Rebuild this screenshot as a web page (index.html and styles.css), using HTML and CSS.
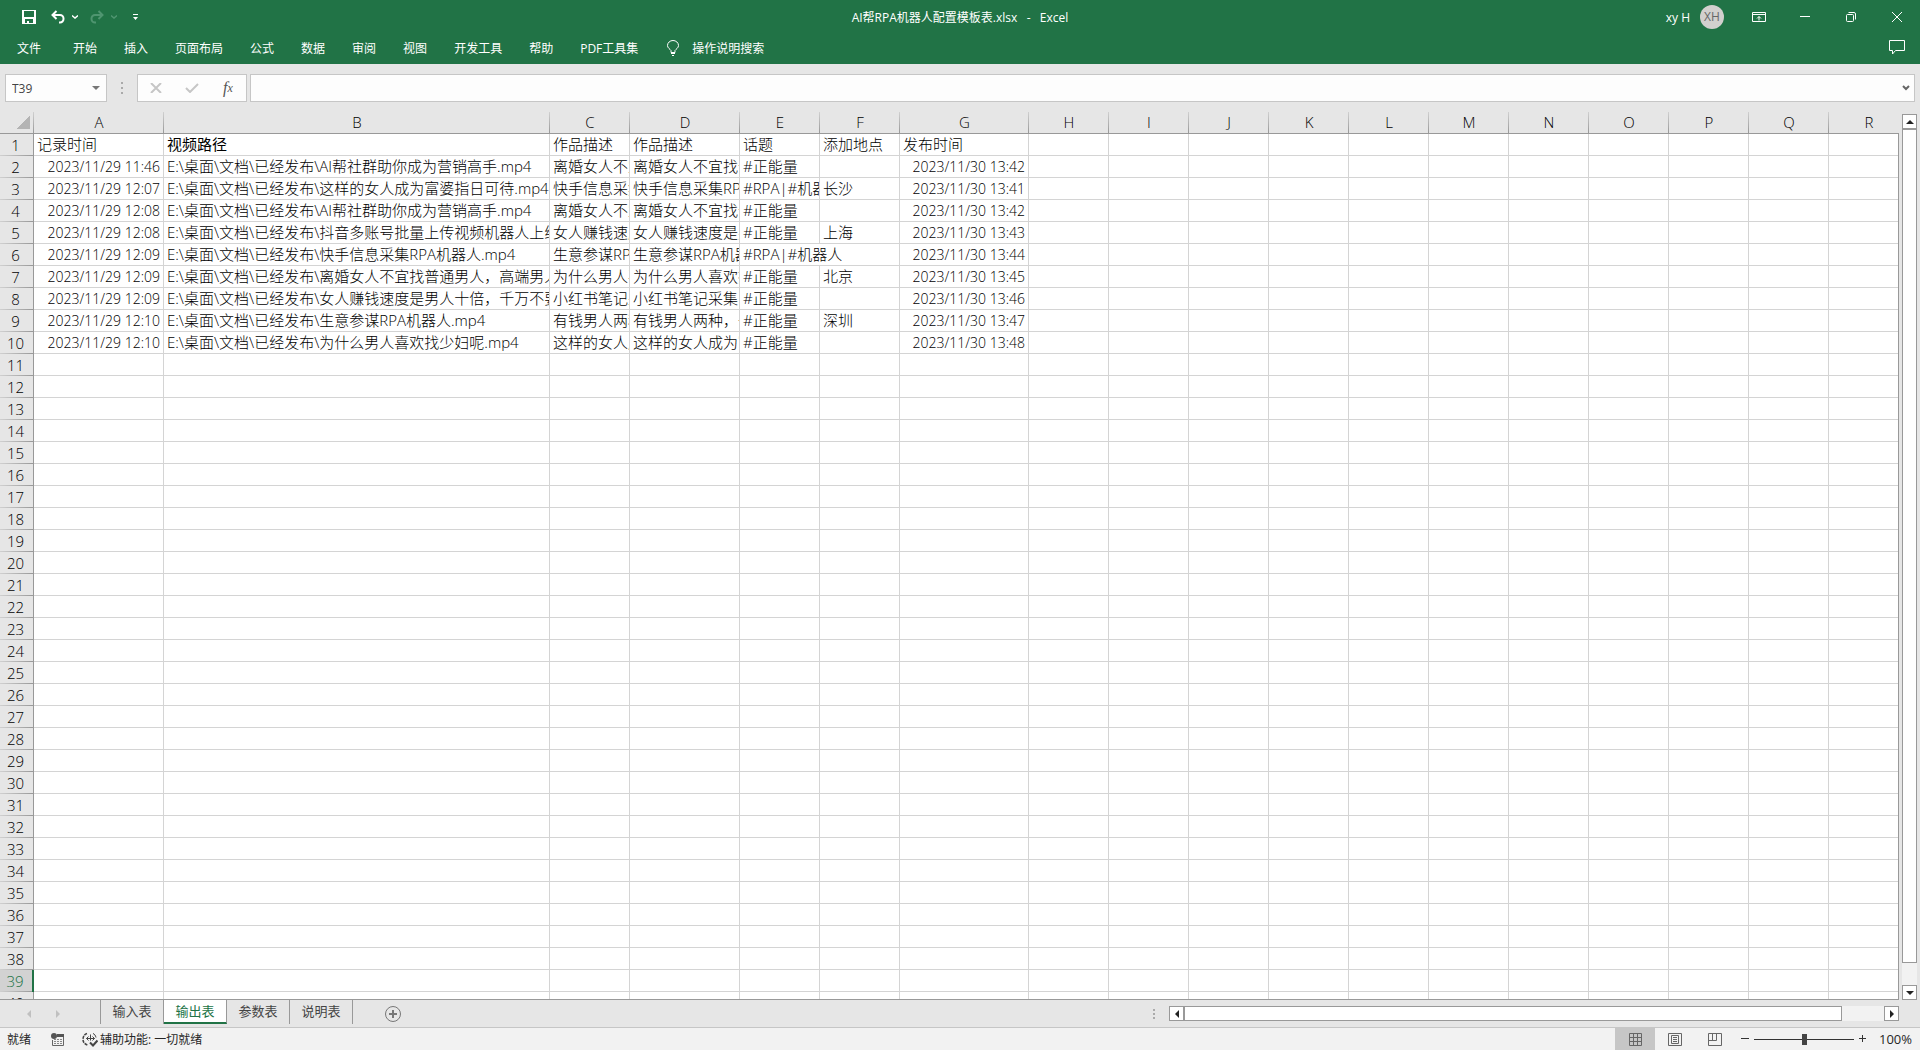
FILE: index.html
```html
<!DOCTYPE html>
<html lang="zh-CN">
<head>
  <meta charset="UTF-8">
  <title>AI帮RPA机器人配置模板表.xlsx - Excel</title>
  <meta name="viewport" content="width=device-width, initial-scale=1.0">
  <link rel="stylesheet" href="styles.css">
</head>
<body>

  <header class="ribbon">
    <div class="titlebar">
      <div class="quick">
        <button class="save" aria-label="保存">
          <svg width="14" height="14" viewBox="0 0 14 14"><path d="M0 0h14v14H0z M2 1v6h10V1z M3 9v4h2v-2h2v2h4V9z" fill="#fff" fill-rule="evenodd"/></svg>
        </button>
        <button class="undo" aria-label="撤消">
          <svg width="14" height="14" viewBox="0 0 14 14" fill="none" stroke="#fff" stroke-width="2"><path d="M5.500 1L1.500 5l4 4M2 5h7a3.500 3.500 0 0 1 3.500 3.500V9A3.500 3.500 0 0 1 9 12.500H8"/></svg>
        </button>
        <button class="arrow" aria-label="撤消列表">
          <svg width="6" height="4" viewBox="0 0 6 4" fill="none" stroke="#fff" stroke-width="1.400"><path d="M0 .5l3 2.500 3-2.500"/></svg>
        </button>
        <button class="redo" aria-label="恢复" disabled>
          <svg width="14" height="14" viewBox="0 0 14 14" fill="none" stroke="#4f9570" stroke-width="2"><path d="M8.500 1l4 4-4 4M12 5H5a3.500 3.500 0 0 0-3.500 3.500V9A3.500 3.500 0 0 0 5 12.500h1"/></svg>
        </button>
        <button class="arrow" aria-label="恢复列表" disabled>
          <svg width="6" height="4" viewBox="0 0 6 4" fill="none" stroke="#4f9570" stroke-width="1.400"><path d="M0 .5l3 2.500 3-2.500"/></svg>
        </button>
        <button class="more" aria-label="自定义快速访问工具栏">
          <svg width="5" height="6" viewBox="0 0 5 6" fill="#fff"><path d="M0 0h5v1H0zM0 3h5L2.500 6z"/></svg>
        </button>
      </div>
      <div class="title">AI帮RPA机器人配置模板表.xlsx&nbsp;&nbsp; -&nbsp;&nbsp; Excel</div>
      <div class="window">
        <span class="user">xy H</span>
        <span class="avatar">XH</span>
        <button aria-label="功能区显示选项">
          <svg width="14" height="12" viewBox="0 0 14 12" fill="none" stroke="#fff"><path d="M.5 1.500h13v9H.5zM.5 3.500h13M7 9.500v-4M5 7.500l2-2 2 2"/></svg>
        </button>
        <button aria-label="最小化">
          <svg width="10" height="10" viewBox="0 0 10 10" stroke="#fff"><path d="M0 4.500h10"/></svg>
        </button>
        <button aria-label="还原">
          <svg width="10" height="10" viewBox="0 0 10 10" fill="none" stroke="#fff"><rect x=".5" y="2.500" width="7" height="7" rx="1"/><path d="M2.500.5H8A1.500 1.500 0 0 1 9.500 2v5.500"/></svg>
        </button>
        <button aria-label="关闭">
          <svg width="10" height="10" viewBox="0 0 10 10" stroke="#fff"><path d="M0 0l10 10M10 0L0 10"/></svg>
        </button>
      </div>
    </div>
    <nav class="menu">
      <a class="file" href="#">文件</a>
      <a href="#">开始</a>
      <a href="#">插入</a>
      <a href="#">页面布局</a>
      <a href="#">公式</a>
      <a href="#">数据</a>
      <a href="#">审阅</a>
      <a href="#">视图</a>
      <a href="#">开发工具</a>
      <a href="#">帮助</a>
      <a href="#">PDF工具集</a>
      <a class="tell" href="#">
        <svg width="12" height="16" viewBox="0 0 12 16" fill="none" stroke="#fff"><path d="M4 12.500v-2C3 9 .5 8 .5 5.500a5.500 5 0 0 1 11 0C11.500 8 9 9 8 10.500v2zM4 13.500h4M5 15.500h2"/></svg>
        操作说明搜索
      </a>
      <button class="comment" aria-label="批注">
        <svg width="16" height="15" viewBox="0 0 16 15" fill="none" stroke="#fff"><path d="M.5.5h15v10h-9l-3 3.500v-3.500h-3z"/></svg>
      </button>
    </nav>
  </header>

  <div class="formula">
    <div class="namebox">
      <input type="text" value="T39" aria-label="名称框">
      <button aria-label="名称列表"><svg width="8" height="4" viewBox="0 0 8 4"><path d="M0 0h8L4 4z" fill="#777"/></svg></button>
    </div>
    <div class="dots"><i></i><i></i><i></i></div>
    <div class="actions">
      <button aria-label="取消"><svg width="12" height="10" viewBox="0 0 12 10" stroke="#c6c6c6" stroke-width="2"><path d="M1 0l10 10M11 0L1 10"/></svg></button>
      <button aria-label="输入"><svg width="14" height="10" viewBox="0 0 14 10" fill="none" stroke="#c6c6c6" stroke-width="2"><path d="M1 5l4 4 8-8"/></svg></button>
      <button class="fx" aria-label="插入函数"><i>f</i><sub>x</sub></button>
    </div>
    <div class="editor">
      <input type="text" aria-label="编辑栏">
      <button aria-label="展开编辑栏"><svg width="8" height="6" viewBox="0 0 8 6" fill="none" stroke="#666" stroke-width="2"><path d="M1 1l3 3 3-3"/></svg></button>
    </div>
  </div>

  <main class="sheet">
    <div class="grid">
      <table>
        <colgroup id="cols">
          <col class="c-head"><col class="c-date"><col class="c-path"><col class="c-std"><col class="c-desc"><col class="c-std"><col class="c-std"><col class="c-pub">
        </colgroup>
        <thead>
          <tr id="letters">
            <th class="corner"></th><th>A</th><th>B</th><th>C</th><th>D</th><th>E</th><th>F</th><th>G</th>
          </tr>
        </thead>
        <tbody id="rows">
          <tr><th>1</th><td>记录时间</td><td class="hei">视频路径</td><td>作品描述</td><td>作品描述</td><td>话题</td><td>添加地点</td><td>发布时间</td></tr>
          <tr><th>2</th><td class="num">2023/11/29 11:46</td><td>E:\桌面\文档\已经发布\AI帮社群助你成为营销高手.mp4</td><td>离婚女人不宜</td><td>离婚女人不宜找普</td><td>#正能量</td><td></td><td class="num">2023/11/30 13:42</td></tr>
          <tr><th>3</th><td class="num">2023/11/29 12:07</td><td>E:\桌面\文档\已经发布\这样的女人成为富婆指日可待.mp4</td><td>快手信息采集</td><td>快手信息采集RPA</td><td>#RPA|#机器人</td><td>长沙</td><td class="num">2023/11/30 13:41</td></tr>
          <tr><th>4</th><td class="num">2023/11/29 12:08</td><td>E:\桌面\文档\已经发布\AI帮社群助你成为营销高手.mp4</td><td>离婚女人不宜</td><td>离婚女人不宜找普</td><td>#正能量</td><td></td><td class="num">2023/11/30 13:42</td></tr>
          <tr><th>5</th><td class="num">2023/11/29 12:08</td><td>E:\桌面\文档\已经发布\抖音多账号批量上传视频机器人上线</td><td>女人赚钱速度</td><td>女人赚钱速度是男</td><td>#正能量</td><td>上海</td><td class="num">2023/11/30 13:43</td></tr>
          <tr><th>6</th><td class="num">2023/11/29 12:09</td><td>E:\桌面\文档\已经发布\快手信息采集RPA机器人.mp4</td><td>生意参谋RPA</td><td>生意参谋RPA机器</td><td colspan="2">#RPA|#机器人</td><td class="num">2023/11/30 13:44</td></tr>
          <tr><th>7</th><td class="num">2023/11/29 12:09</td><td>E:\桌面\文档\已经发布\离婚女人不宜找普通男人，高端男人</td><td>为什么男人喜</td><td>为什么男人喜欢找</td><td>#正能量</td><td>北京</td><td class="num">2023/11/30 13:45</td></tr>
          <tr><th>8</th><td class="num">2023/11/29 12:09</td><td>E:\桌面\文档\已经发布\女人赚钱速度是男人十倍，千万不要</td><td>小红书笔记采</td><td>小红书笔记采集</td><td>#正能量</td><td></td><td class="num">2023/11/30 13:46</td></tr>
          <tr><th>9</th><td class="num">2023/11/29 12:10</td><td>E:\桌面\文档\已经发布\生意参谋RPA机器人.mp4</td><td>有钱男人两种</td><td>有钱男人两种，一</td><td>#正能量</td><td>深圳</td><td class="num">2023/11/30 13:47</td></tr>
          <tr><th>10</th><td class="num">2023/11/29 12:10</td><td>E:\桌面\文档\已经发布\为什么男人喜欢找少妇呢.mp4</td><td>这样的女人成</td><td>这样的女人成为富</td><td>#正能量</td><td></td><td class="num">2023/11/30 13:48</td></tr>
        </tbody>
      </table>
    </div>
    <div class="vscroll">
      <button aria-label="向上滚动"><svg width="8" height="4" viewBox="0 0 8 4"><path d="M0 4h8L4 0z" fill="#222"/></svg></button>
      <div class="thumb"></div>
      <div class="track"></div>
      <button aria-label="向下滚动"><svg width="8" height="4" viewBox="0 0 8 4"><path d="M0 0h8L4 4z" fill="#222"/></svg></button>
    </div>
  </main>

  <div class="tabbar">
    <div class="tabnav">
      <button aria-label="上一个工作表" disabled><svg width="4" height="8" viewBox="0 0 4 8"><path d="M4 0v8L0 4z" fill="#c0c0c0"/></svg></button>
      <button aria-label="下一个工作表" disabled><svg width="4" height="8" viewBox="0 0 4 8"><path d="M0 0v8l4-4z" fill="#c0c0c0"/></svg></button>
    </div>
    <div class="tabs">
      <a href="#">输入表</a>
      <a href="#" class="active">输出表</a>
      <a href="#">参数表</a>
      <a href="#">说明表</a>
    </div>
    <button class="add" aria-label="新工作表">
      <svg width="16" height="16" viewBox="0 0 16 16" fill="none" stroke="#777"><circle cx="8" cy="8" r="7.500"/><path d="M8 4v8M4 8h8" stroke-width="2"/></svg>
    </button>
    <div class="dots"><i></i><i></i><i></i></div>
    <div class="hscroll">
      <button aria-label="向左滚动"><svg width="4" height="8" viewBox="0 0 4 8"><path d="M4 0v8L0 4z" fill="#222"/></svg></button>
      <div class="thumb"></div>
      <div class="track"></div>
      <button aria-label="向右滚动"><svg width="4" height="8" viewBox="0 0 4 8"><path d="M0 0v8l4-4z" fill="#222"/></svg></button>
    </div>
  </div>

  <footer class="status">
    <span>就绪</span>
    <button class="macro" aria-label="录制宏">
      <svg width="13" height="13" viewBox="0 0 13 13"><path d="M1.500 7v5.500h11V4" fill="none" stroke="#666"/><path d="M6 1h7v3H6z" fill="#555"/><circle cx="3" cy="3" r="3" fill="#555"/><path d="M3 6.500h2M6 6.500h2M9 6.500h2M3 8.500h2M6 8.500h2M9 8.500h2M3 10.500h2M6 10.500h2M9 10.500h2" stroke="#888"/></svg>
    </button>
    <button class="access">
      <svg width="16" height="15" viewBox="0 0 16 15" fill="none" stroke="#444"><path d="M5 1.500C2 2.500 1 5 1 7.500S2.500 12 5.500 13" stroke-dasharray="3 1" stroke-width="1.500"/><path d="M11 1.500c1.500.5 2.500 2 3 4M4.500 6.500h8M8.500 2.500v6M6.500 4.500l-2 2 2 2M10.500 4.500l2 2-2 2"/><path d="M8 10.500l3 3 4.500-5" stroke-width="2"/></svg>
      辅助功能: 一切就绪
    </button>
    <div class="views">
      <button class="on" aria-label="普通"><svg width="13" height="13" viewBox="0 0 13 13" fill="none" stroke="#666"><path d="M.5.5h12v12H.5zM4.500.5v12M8.500.5v12M.5 4.500h12M.5 8.500h12"/></svg></button>
      <button aria-label="页面布局"><svg width="14" height="13" viewBox="0 0 14 13" fill="none" stroke="#666"><path d="M.5.5h13v12H.5zM3.500 2.500h7v8h-7zM5 4.500h4M5 6.500h4M5 8.500h4"/></svg></button>
      <button aria-label="分页预览"><svg width="14" height="13" viewBox="0 0 14 13" fill="none" stroke="#666"><path d="M.5.5h13v12H.5zM.5 7.500h8v-7M4.500.5v7"/></svg></button>
    </div>
    <button class="zoom" aria-label="缩小"><svg width="8" height="8" viewBox="0 0 8 8" stroke="#333"><path d="M0 3.500h8"/></svg></button>
    <input class="slider" type="range" min="0" max="100" value="50" aria-label="缩放">
    <button class="zoom" aria-label="放大"><svg width="8" height="8" viewBox="0 0 8 8" stroke="#333"><path d="M0 3.500h7M3.500 0v7"/></svg></button>
    <span class="percent">100%</span>
  </footer>

  <script src="script.js"></script>
</body>
</html>
```
FILE: styles.css
```css
* {
  box-sizing: border-box;
}

body {
  margin: 0;
  height: 100vh;
  display: flex;
  flex-direction: column;
  overflow: hidden;
  background: #e6e6e6;
  color: #262626;
  font-family: "Open Sans", "Noto Sans CJK SC", sans-serif;
  font-size: 12px;
}

a {
  color: inherit;
  text-decoration: none;
}

button {
  display: flex;
  align-items: center;
  justify-content: center;
  padding: 0;
  border: none;
  background: none;
  color: inherit;
  font: inherit;
}

input {
  min-width: 0;
  border: none;
  outline: none;
  background: none;
  color: inherit;
  font: inherit;
}

svg {
  flex: none;
}

/* title bar + menu */
.ribbon {
  background: #217346;
  color: #fff;
}

.titlebar {
  display: grid;
  grid-template-columns: 1fr auto 1fr;
  align-items: center;
  height: 34px;
}

.quick {
  display: flex;
  align-items: center;
  padding-left: 22px;
}

.undo {
  margin-left: 15px;
}

.arrow {
  margin-left: 7px;
}

.redo {
  margin-left: 12px;
}

.more {
  margin-left: 16px;
}

.window {
  display: flex;
  align-items: center;
  justify-content: flex-end;
}

.window button {
  width: 46px;
  height: 30px;
}

.avatar {
  width: 24px;
  height: 24px;
  margin: 0 12px 0 10px;
  border-radius: 50%;
  background: #d2d0ce;
  color: #666;
  line-height: 24px;
  text-align: center;
}

.menu {
  display: flex;
  align-items: center;
  gap: 27px;
  height: 30px;
  padding: 0 15px 3px 17px;
}

.file {
  margin-right: 5px;
}

.tell {
  display: flex;
  align-items: center;
  gap: 13px;
  margin-left: 2px;
}

.comment {
  margin-left: auto;
}

/* formula bar */
.formula {
  display: flex;
  height: 48px;
  padding: 10px 5px;
}

.namebox,
.actions,
.editor {
  display: flex;
  align-items: center;
  border: 1px solid #c6c6c6;
  background: #fdfdfd;
}

.namebox {
  width: 102px;
  padding: 0 6px;
  color: #444;
}

.namebox input {
  flex: 1;
  padding: 0;
}

.dots {
  display: flex;
  flex-direction: column;
  align-items: center;
  justify-content: center;
  gap: 3px;
  width: 30px;
}

.dots i {
  width: 2px;
  height: 2px;
  background: #aaa;
}

.actions {
  width: 110px;
}

.actions button {
  flex: 1;
}

.fx {
  color: #555;
  font-family: "Liberation Serif", serif;
  font-size: 16px;
}

.fx sub {
  font-size: 12px;
  font-style: italic;
}

.editor {
  flex: 1;
  margin-left: 3px;
  padding-right: 4px;
}

.editor input {
  flex: 1;
}

/* worksheet */
.sheet {
  flex: 1;
  display: flex;
  min-height: 0;
}

.grid {
  position: relative;
  flex: 1;
  min-width: 0;
  overflow: hidden;
  border-bottom: 1px solid #999;
}

/* right edge of the cells, starts under the column letters */
.grid::after {
  content: "";
  position: absolute;
  top: 21px;
  right: 0;
  bottom: 0;
  width: 1px;
  background: #999;
}

table {
  width: 0;
  table-layout: fixed;
  border-collapse: separate;
  border-spacing: 0;
  background: #fff;
  color: #000;
  font-size: 15px;
  font-weight: 300;
}

.c-head { width: 34px; }
.c-date { width: 130px; }
.c-path { width: 386px; }
.c-std { width: 80px; }
.c-desc { width: 110px; }
.c-pub { width: 129px; }

th,
td {
  height: 22px;
  padding: 0 3px;
  line-height: 21px;
  white-space: nowrap;
  overflow: hidden;
}

td {
  border-right: 1px solid #d4d4d4;
  border-bottom: 1px solid #d4d4d4;
  text-align: left;
}

th {
  padding: 0;
  background: #e6e6e6;
  font-weight: 300;
}

thead th {
  border-bottom: 1px solid #999;
  background: linear-gradient(#d0d0d0, #999) right / 1px 100% no-repeat #e6e6e6;
}

tbody th {
  padding-right: 2px;
  border-right: 1px solid #999;
  background: linear-gradient(to right, #d0d0d0, #999) bottom / 100% 1px no-repeat #e6e6e6;
}

.corner::before {
  content: "";
  display: block;
  width: 13px;
  height: 13px;
  margin-left: 17px;
  background: linear-gradient(135deg, transparent 50%, #b4b4b4 50%);
}

.selected th {
  border-right: 2px solid #217346;
  background-color: #d2d2d2;
  color: #217346;
}

.num {
  font-size: 14px;
  text-align: right;
}

.hei {
  font-weight: 400;
}

/* scroll bars */
.vscroll {
  display: flex;
  flex-direction: column;
  width: 15px;
  margin: 2px 3px 0;
  background: #f2f2f2;
}

.hscroll {
  display: flex;
  width: 730px;
  height: 15px;
  margin-right: 21px;
  background: #f2f2f2;
}

.vscroll button,
.hscroll button {
  flex: none;
  width: 15px;
  height: 15px;
  border: 1px solid #999;
  background: #fff;
}

.thumb {
  border: 1px solid #999;
  background: #fff;
}

.vscroll .thumb { flex: 38; }
.vscroll .track { flex: 1; }
.hscroll .thumb { flex: 47; }
.hscroll .track { flex: 3; }

/* sheet tabs */
.tabbar {
  display: flex;
  align-items: center;
  height: 28px;
  border-bottom: 1px solid #c6c6c6;
}

.tabnav {
  display: flex;
  gap: 25px;
  width: 100px;
  padding-left: 27px;
}

.tabs {
  display: flex;
  align-self: flex-start;
  height: 24px;
  border-left: 1px solid #999;
}

.tabs a {
  width: 63px;
  border-right: 1px solid #999;
  color: #444;
  font-size: 13px;
  line-height: 22px;
  text-align: center;
}

.tabs .active {
  border-bottom: 2px solid #217346;
  background: #fff;
  color: #217346;
}

.add {
  margin-left: 32px;
}

.tabbar .dots {
  gap: 2px;
  margin-left: auto;
}

/* status bar */
.status {
  display: flex;
  align-items: center;
  height: 22px;
  padding: 0 8px 0 7px;
  background: #f2f2f2;
}

.macro {
  margin-left: 20px;
}

.access {
  gap: 2px;
  margin-left: 18px;
}

.views {
  display: flex;
  align-self: stretch;
  margin: 0 6px 0 auto;
}

.views button {
  width: 40px;
}

.views .on {
  background: #c6c6c6;
}

.slider {
  width: 100px;
  height: 11px;
  margin: 0 5px;
  appearance: none;
  background: linear-gradient(#333, #333) center / 100% 1px no-repeat;
}

.slider::-webkit-slider-thumb {
  appearance: none;
  width: 5px;
  height: 11px;
  background: #444;
}

.percent {
  width: 45px;
  font-size: 13px;
  text-align: right;
}
```
FILE: script.js
```js
const cols = document.getElementById('cols');
const letters = document.getElementById('letters');
const rows = document.getElementById('rows');

// empty columns H..R
for (const letter of 'HIJKLMNOPQR') {
  const col = document.createElement('col');
  col.className = 'c-std';
  cols.append(col);

  const th = document.createElement('th');
  th.textContent = letter;
  letters.append(th);

  for (const row of rows.rows) {
    row.insertCell();
  }
}

// empty rows below the data
for (let i = 11; i <= 40; i++) {
  const row = rows.insertRow();
  const th = document.createElement('th');
  th.textContent = i;
  row.append(th);
  for (let c = 0; c < 18; c++) {
    row.insertCell();
  }
  if (i === 39) row.className = 'selected';
}
```
